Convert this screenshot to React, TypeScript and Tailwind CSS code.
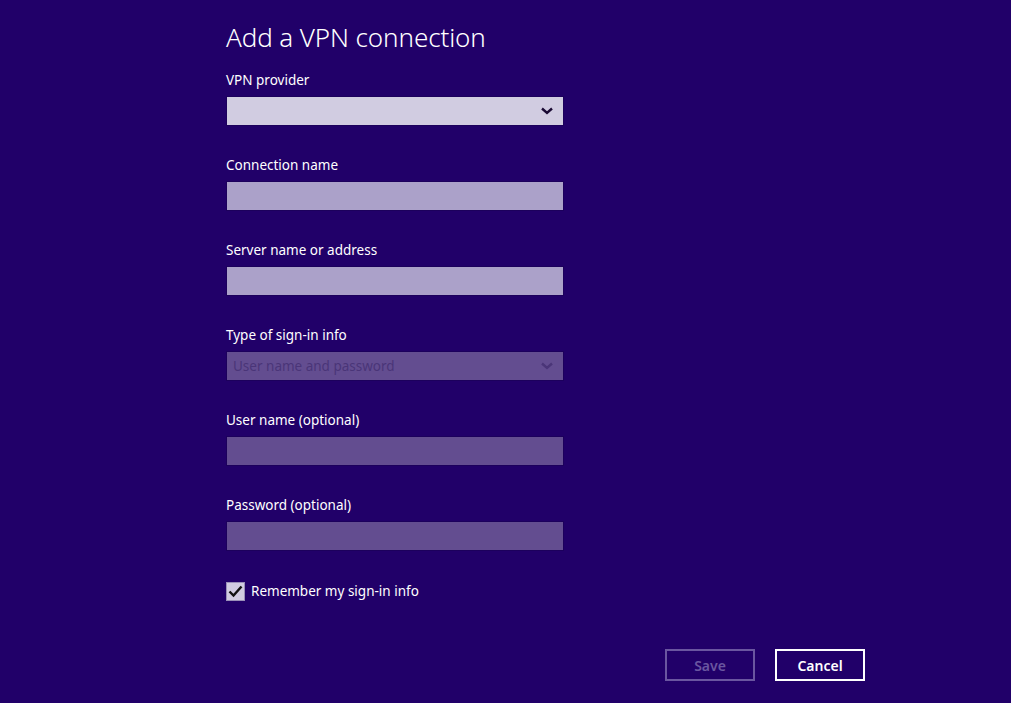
import React from 'react';

const font = { fontFamily: '"Segoe UI", "Noto Sans", "Open Sans", sans-serif' };

const Chevron = ({ className }: { className?: string }) => (
  <svg width="12" height="8" viewBox="0 0 12 8" className={className}>
    <path d="M1 1.5 L6 6 L11 1.5" fill="none" stroke="currentColor" strokeWidth="2.4" />
  </svg>
);

const Field = ({ label, children }: { label: string; children: React.ReactNode }) => (
  <div className="flex flex-col">
    <label className="text-[13.5px] leading-[19px] text-white">{label}</label>
    <div className="mt-[6px]">{children}</div>
  </div>
);

const TextBox = ({ tone }: { tone: 'light' | 'dim' }) => (
  <div
    className={
      'h-[30px] w-[338px] border border-[#1c005c] ' +
      (tone === 'light' ? 'bg-[#aba1c9]' : 'bg-[#634d90]')
    }
  />
);

export default function App() {
  return (
    <div className="min-h-[703px] w-full bg-[#210069]" style={font}>
      <div className="pl-[226px] pt-[20px]">
        <h1 className="text-[26px] leading-[34px] font-light text-white tracking-[-0.1px]">Add a VPN connection</h1>

        <div className="mt-[17px] flex flex-col gap-[30px]">
          <Field label="VPN provider">
            <div className="flex h-[30px] w-[338px] items-center justify-end border border-[#1c005c] bg-[#d1cce1] pr-[10px]">
              <Chevron className="text-[#1a0a33]" />
            </div>
          </Field>

          <Field label="Connection name">
            <TextBox tone="light" />
          </Field>

          <Field label="Server name or address">
            <TextBox tone="light" />
          </Field>

          <Field label="Type of sign-in info">
            <div className="flex h-[30px] w-[338px] items-center justify-between border border-[#1c005c] bg-[#634d90] pl-[6px] pr-[10px]">
              <span className="text-[13.5px] text-[#4a3578]">User name and password</span>
              <Chevron className="text-[#4a3578]" />
            </div>
          </Field>

          <Field label="User name (optional)">
            <TextBox tone="dim" />
          </Field>

          <Field label="Password (optional)">
            <TextBox tone="dim" />
          </Field>
        </div>

        <div className="mt-[30px] flex h-[20px] items-center gap-[6px]">
          <div className="flex h-[19px] w-[19px] items-center justify-center border border-[#9a90b8] bg-[#d1cce1]">
            <svg width="15" height="13" viewBox="0 0 15 13">
              <path d="M1.5 6.5 L5.5 10.5 L13.5 1.5" fill="none" stroke="#111" strokeWidth="2.4" />
            </svg>
          </div>
          <span className="text-[13.5px] leading-[20px] text-white">Remember my sign-in info</span>
        </div>
      </div>

      <div className="mt-[48px] flex justify-end gap-[20px] pr-[146px]">
        <button className="h-[32px] w-[90px] border-2 border-[#6a56a0] text-[14px] font-semibold text-[#6a56a0]">
          Save
        </button>
        <button className="h-[32px] w-[90px] border-2 border-white text-[14px] font-semibold text-white">
          Cancel
        </button>
      </div>
    </div>
  );
}
